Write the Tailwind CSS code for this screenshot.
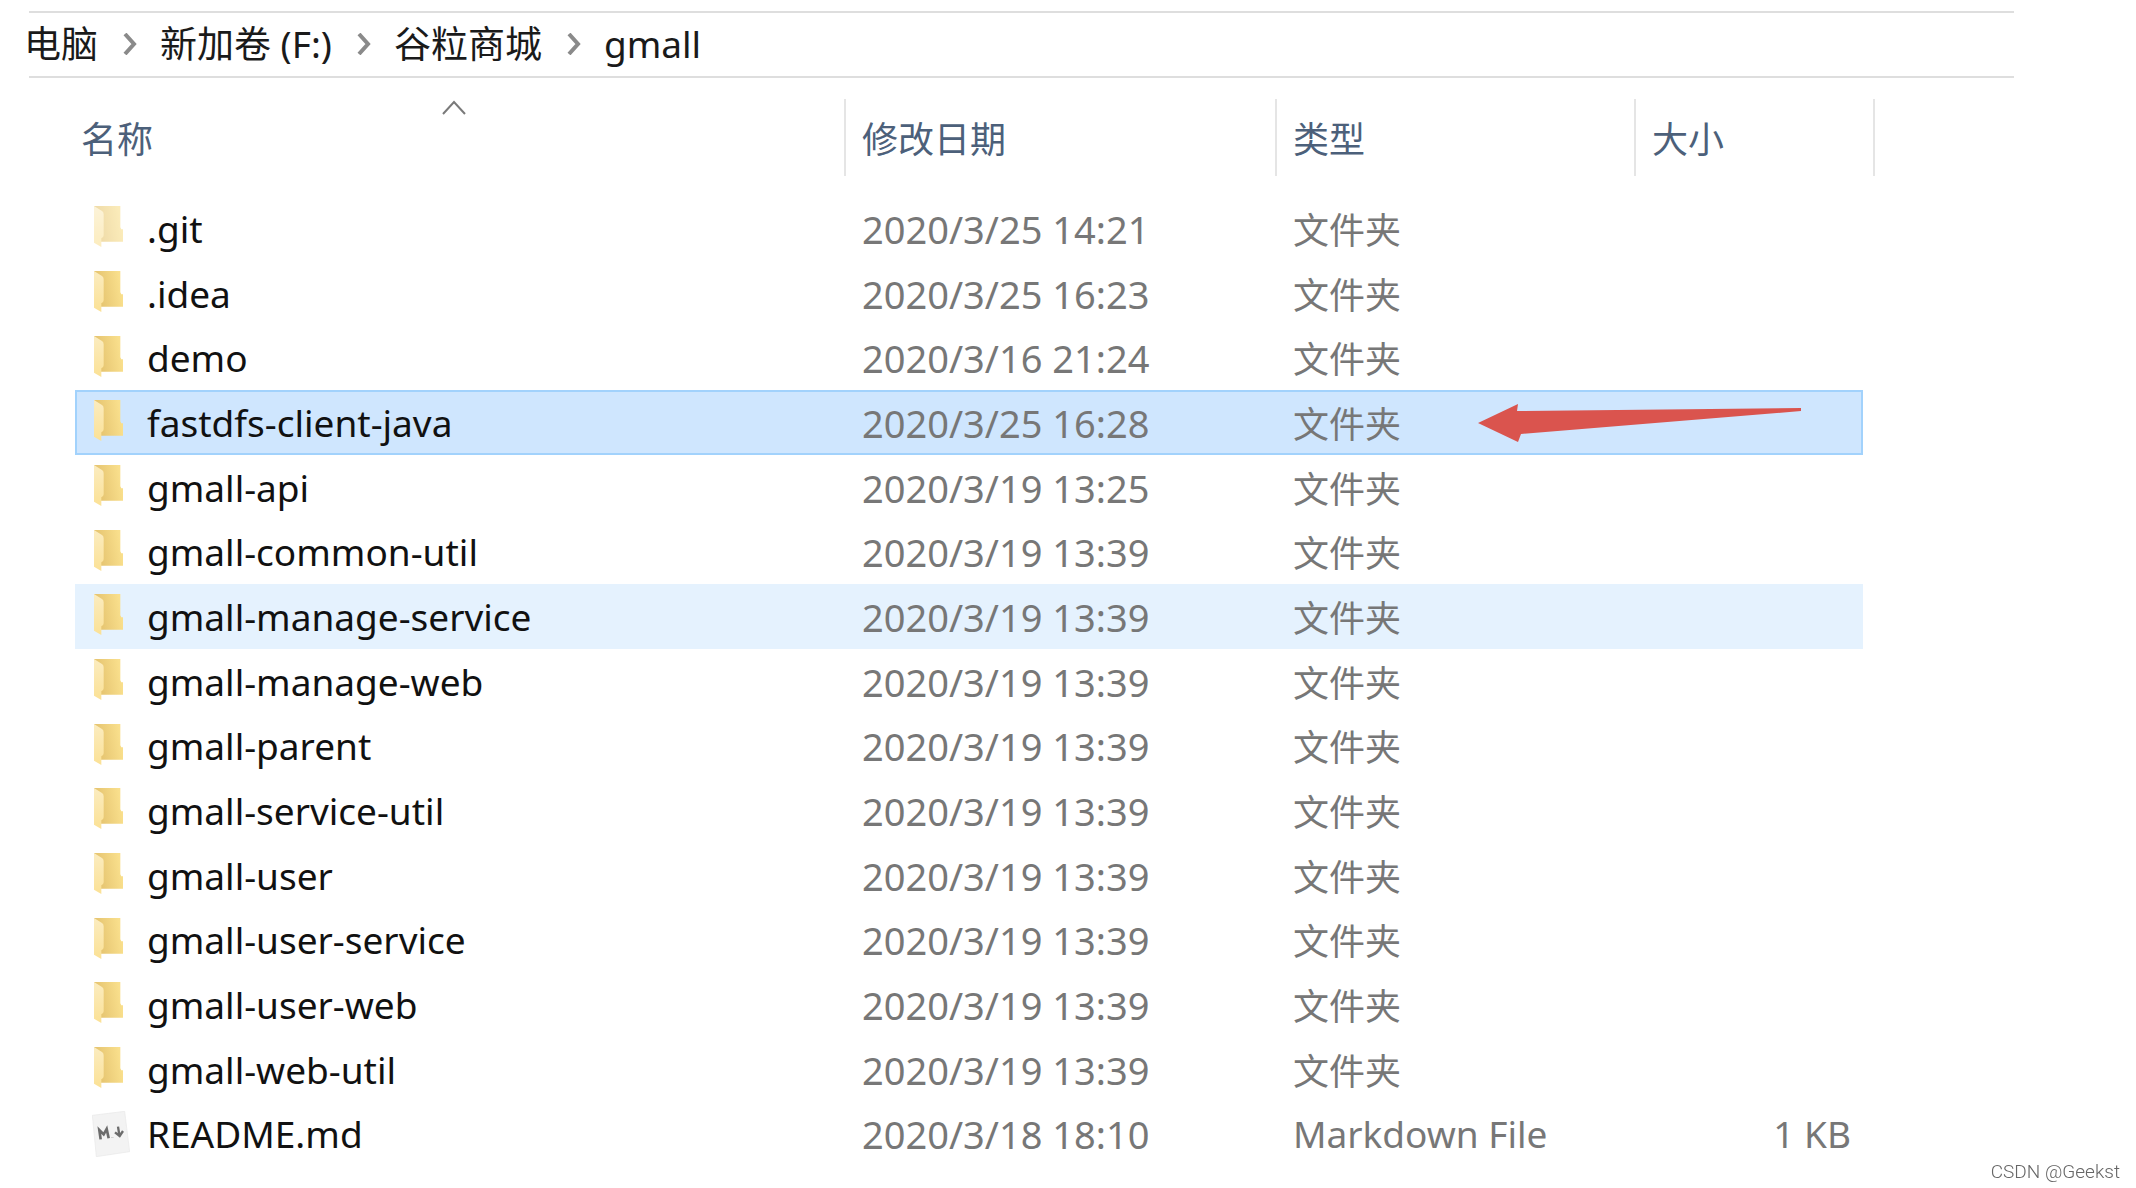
<!DOCTYPE html>
<html lang="zh-CN">
<head>
  <meta charset="UTF-8" />
  <meta name="viewport" content="width=device-width, initial-scale=1.0" />
  <title>gmall</title>
  <script src="https://cdn.jsdelivr.net/npm/@tailwindcss/browser@4"></script>
</head>
<body class="bg-white min-h-screen font-['Noto_Sans','Noto_Sans_CJK_SC',sans-serif]">
  <!-- shared icons -->
  <svg class="absolute w-0 h-0">
    <defs>
      <linearGradient id="back" x1="0" y1="1" x2="1" y2="0.8">
        <stop offset="0.25" stop-color="#e6c571" />
        <stop offset="1" stop-color="#f9df8c" />
      </linearGradient>
      <linearGradient id="flap" x1="0" y1="0" x2="0" y2="1">
        <stop offset="0" stop-color="#fbecc0" />
        <stop offset="1" stop-color="#fbe195" />
      </linearGradient>
    </defs>
    <symbol id="folder" viewBox="0 0 87 123">
      <path d="M0 0H79V64L82 70H87V107H10Z" fill="url(#back)" />
      <path d="M0 0L24 15Q29 18 29 25V88Q29 94 22 97V123L0 110Z" fill="url(#flap)" />
    </symbol>
    <symbol id="markdown" viewBox="0 0 114 138">
      <path d="M1 13L98 1L113 122L13 137Z" fill="#f3f3f3" stroke="#e9e9e9" stroke-width="2" />
      <path d="M26 85L22 57L35 70L44 54L50 82M61 80V81" fill="none" stroke="#6c6c6c" stroke-width="8" />
      <path d="M78 47L82 72M69 64L83 75L93 60" fill="none" stroke="#6c6c6c" stroke-width="7" />
    </symbol>
    <symbol id="chevron" viewBox="0 0 14 22">
      <path d="M2 1L11 11L2 21" fill="none" stroke="#8a8a8a" stroke-width="4" />
    </symbol>
  </svg>

  <nav class="ml-[29px] mr-[122px] pt-[11px]">
    <div class="flex items-center h-[67px] pb-0.5 border-y-2 border-[#dedede] text-[37px] leading-none text-[#1a1a1a] whitespace-nowrap">
      <a href="#" class="-ml-[5px]">电脑</a>
      <svg class="w-[14px] h-[22px] ml-[25px] mr-[23px]"><use href="#chevron" /></svg>
      <a href="#">新加卷 (F:)</a>
      <svg class="w-[14px] h-[22px] ml-[25px] mr-[23px]"><use href="#chevron" /></svg>
      <a href="#">谷粒商城</a>
      <svg class="w-[14px] h-[22px] ml-[25px] mr-[23px]"><use href="#chevron" /></svg>
      <a href="#">gmall</a>
    </div>
  </nav>

  <main class="ml-[75px] mr-[261px] mt-[21px]">
    <table class="w-full table-fixed border-separate border-spacing-0 text-left whitespace-nowrap">
      <colgroup>
        <col />
        <col class="w-[431px]" />
        <col class="w-[359px]" />
        <col class="w-[229px]" />
        <col class="w-[12px]" />
      </colgroup>
      <thead class="text-4xl text-[#4c607a]">
        <tr>
          <th class="relative p-0 pb-5 font-normal">
            <svg class="absolute left-1/2 top-0 w-6 h-4 -ml-[18px]" viewBox="0 0 24 16"><path d="M1 15L12 3L23 15" fill="none" stroke="#7a7a7a" stroke-width="2" /></svg>
            <button class="w-full h-[77px] pt-1 pl-[6px] text-left">名称</button>
          </th>
          <th class="p-0 pb-5 font-normal"><button class="w-full h-[77px] pt-1 pl-4 text-left border-l-2 border-[#e5e5e5]">修改日期</button></th>
          <th class="p-0 pb-5 font-normal"><button class="w-full h-[77px] pt-1 pl-4 text-left border-l-2 border-[#e5e5e5]">类型</button></th>
          <th class="p-0 pb-5 font-normal"><button class="w-full h-[77px] pt-1 pl-4 text-left border-l-2 border-[#e5e5e5]">大小</button></th>
          <td class="p-0 pb-5"><div class="h-[77px] border-r-2 border-[#e5e5e5]"></div></td>
        </tr>
      </thead>
      <tbody id="files"></tbody>
    </table>
  </main>

  <footer class="fixed right-4 bottom-1 font-[Roboto,sans-serif] font-light text-[19px] leading-6 text-[#666666]">CSDN @Geekst</footer>

  <script>
    const files = [
      { name: ".git", date: "2020/3/25 14:21", hidden: true },
      { name: ".idea", date: "2020/3/25 16:23" },
      { name: "demo", date: "2020/3/16 21:24" },
      { name: "fastdfs-client-java", date: "2020/3/25 16:28", state: "selected" },
      { name: "gmall-api", date: "2020/3/19 13:25" },
      { name: "gmall-common-util", date: "2020/3/19 13:39" },
      { name: "gmall-manage-service", date: "2020/3/19 13:39", state: "hover" },
      { name: "gmall-manage-web", date: "2020/3/19 13:39" },
      { name: "gmall-parent", date: "2020/3/19 13:39" },
      { name: "gmall-service-util", date: "2020/3/19 13:39" },
      { name: "gmall-user", date: "2020/3/19 13:39" },
      { name: "gmall-user-service", date: "2020/3/19 13:39" },
      { name: "gmall-user-web", date: "2020/3/19 13:39" },
      { name: "gmall-web-util", date: "2020/3/19 13:39" },
      { name: "README.md", date: "2020/3/18 18:10", type: "Markdown File", size: "1 KB" },
    ];

    const cellStyle = {
      selected: "bg-[#cfe6fe] border-y-2 border-[#a2d2fc]",
      hover: "bg-[#e5f2fe]",
    };

    const arrow = `<svg class="absolute left-[203px] top-3 w-[323px] h-[38px]" viewBox="0 0 323 38"><path d="M0 19L40 0L39 7L323 4V7L43 30L40 38Z" fill="#da544e" /></svg>`;

    document.getElementById("files").innerHTML = files.map((f) => {
      const cell = cellStyle[f.state] || "";
      const selected = f.state === "selected";
      const icon = f.type
        ? `<svg class="w-[38px] h-[46px] -ml-[2px]"><use href="#markdown" /></svg>`
        : `<svg class="w-[29px] h-[41px] mb-1 ${f.hidden ? "opacity-60" : ""}"><use href="#folder" /></svg>`;
      return `
        <tr class="h-[65px] nth-[3n]:h-16 text-[37px] leading-[48px] text-[#777777]">
          <td class="p-0 ${cell} ${selected ? "border-l-2" : ""}">
            <div class="flex items-center ${selected ? "pl-[17px]" : "pl-[19px]"}">
              <div class="w-[53px] flex">${icon}</div>
              <a href="#" class="text-[#111111]">${f.name}</a>
            </div>
          </td>
          <td class="p-0 pl-[18px] text-[38px] ${cell}">${f.date}</td>
          <td class="relative p-0 pl-[18px] ${f.type ? "" : "pt-1 text-4xl/12"} ${cell}">${f.type || "文件夹"}${selected ? arrow : ""}</td>
          <td class="p-0 pr-3 text-right ${cell} ${selected ? "border-r-2" : ""}">${f.size || ""}</td>
          <td class="p-0"></td>
        </tr>`;
    }).join("");
  </script>
</body>
</html>
